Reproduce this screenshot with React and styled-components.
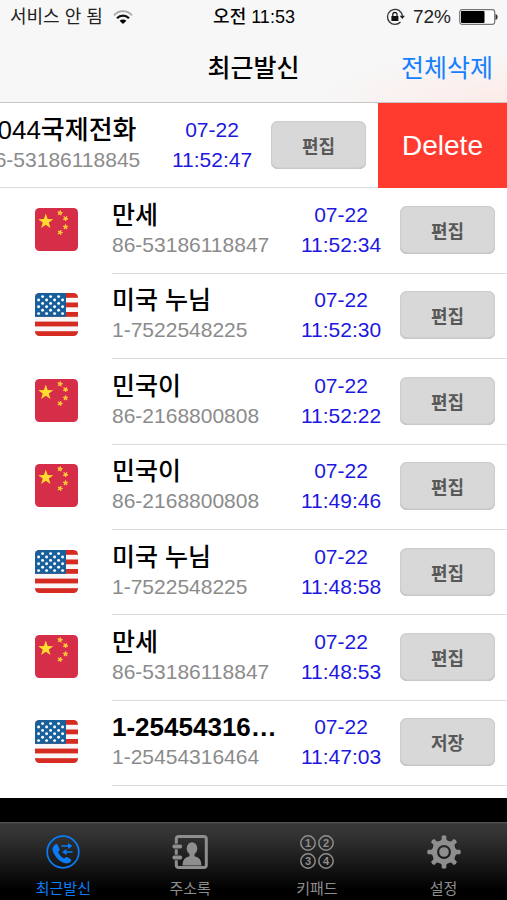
import React from "react";
import styled, { createGlobalStyle, css } from "styled-components";

const GlobalStyle = createGlobalStyle`
  *, *::before, *::after { box-sizing: border-box; }
  body {
    margin: 0;
    background: #fff;
    color: #000;
    font-family: "Liberation Sans", "Noto Sans CJK KR", sans-serif;
  }
  button { font-family: inherit; border: 0; padding: 0; cursor: pointer; }
`;

const Screen = styled.div`
  min-height: 100vh;
  display: flex;
  flex-direction: column;
  overflow: hidden;
`;

const TopArea = styled.header`
  background: radial-gradient(ellipse 190px 50px at 100% 100%, #fdebe8 0, #f7f7f700 100%), #f7f7f7;
  border-bottom: 1px solid #c9c6c8;
`;

const StatusBar = styled.div`
  display: grid;
  grid-template-columns: 1fr auto 1fr;
  align-items: center;
  height: 34px;
  padding: 0 9px 0 10px;
  font-size: 18px;
  line-height: 34px;
  color: #222;
`;

const StatusGroup = styled.div`
  display: flex;
  align-items: center;
  gap: ${(p) => (p.$end ? "8px" : "10px")};
  justify-content: ${(p) => (p.$end ? "flex-end" : "flex-start")};
`;

const Percent = styled.span`
  font-size: 19px;
`;

const Clock = styled.time`
  font-weight: 500;
  color: #000;
`;

const NavBar = styled.div`
  display: grid;
  grid-template-columns: 1fr auto 1fr;
  align-items: center;
  height: 68px;
  padding: 0 14px;
`;

const Title = styled.h1`
  grid-column: 2;
  margin: 0;
  font-size: 25px;
  line-height: 36px;
  font-weight: 500;
`;

const TextButton = styled.button`
  justify-self: end;
  background: none;
  color: #1480ff;
  font-size: 25px;
  line-height: 36px;
`;

const CallList = styled.ul`
  flex: 1;
  display: grid;
  grid-auto-rows: minmax(80px, 1fr);
  margin: 0;
  padding: 0 0 12px;
  list-style: none;
`;

const CallItem = styled.li`
  display: flex;
  min-width: 0;
  overflow: hidden;
`;

const Cell = styled.div`
  flex: 0 0 100%;
  min-width: 0;
  display: flex;
  padding-left: 35px;
  gap: 34px;
  ${(p) => p.$swiped && css`margin-left: -129px;`}
`;

const FlagBox = styled.div`
  flex: none;
  display: flex;
  align-items: center;
  width: 43px;
  padding-bottom: 3px;
`;

const CellBody = styled.div`
  flex: 1;
  min-width: 0;
  display: flex;
  align-items: center;
  gap: 14px;
  padding: 0 12px 1px 0;
  border-bottom: 1px solid #dcdcde;
`;

const Person = styled.div`
  flex: 1;
  min-width: 0;
  line-height: 30px;
  white-space: nowrap;
`;

const Name = styled.div`
  font-size: ${(p) => (p.$large ? 26 : 25)}px;
  font-weight: ${(p) => (p.$strong ? 700 : 500)};
  overflow: hidden;
  text-overflow: ellipsis;
`;

const Number = styled.div`
  font-size: 21px;
  color: #8b8b8b;
`;

const When = styled.time`
  flex: none;
  display: flex;
  flex-direction: column;
  align-items: center;
  width: 90px;
  font-size: 21px;
  line-height: 30px;
  color: #1d18e0;
`;

const ActionButton = styled.button`
  flex: none;
  width: 95px;
  height: 48px;
  border-radius: 7px;
  background: #d8d8d8;
  box-shadow: inset 0 0 1px 1px #cccccc, inset 0 -1px 1px #a4a4a4;
  color: #585858;
  font-size: 18px;
  font-weight: 700;
`;

const DeleteButton = styled.button`
  flex: 0 0 129px;
  background: #ff3b30;
  color: #fff;
  font-size: 28px;
`;

const TabBar = styled.nav`
  display: grid;
  grid-template-columns: repeat(4, 1fr);
  border-top: 24px solid #000;
  background: linear-gradient(#5a5a5a 0, #383838 2px, #303030 16px, #121212 48px, #000 68px) padding-box;
`;

const Tab = styled.button`
  display: flex;
  flex-direction: column;
  align-items: center;
  gap: 10px;
  height: 78px;
  padding-top: 13px;
  background: none;
  color: ${(p) => (p.$active ? "#0a7cf8" : "#8e8e8e")};
  font-size: 15px;
  line-height: 20px;
`;

const STAR = "M0 -1 L.235 -.324 .951 -.309 .38 .124 .588 .809 0 .4 -.588 .809 -.38 .124 -.951 -.309 -.235 -.324Z";

function ChinaFlag() {
  const small = [[25, 5, 10], [30.5, 10.5, 30], [30.5, 19, 0], [25, 24.5, 20]];
  return (
    <svg width="43" height="43" viewBox="0 0 43 43" role="img" aria-label="중국">
      <rect width="43" height="43" rx="4.500" fill="#d62d48" />
      <path d={STAR} transform="translate(10.8 13.6) scale(8)" fill="#ffdc2e" />
      {small.map(([x, y, r]) => (
        <path
          key={y}
          d={STAR}
          transform={`translate(${x} ${y}) rotate(${r}) scale(2.5)`}
          fill="#ffc93c"
          stroke="#ffc93c"
          strokeWidth=".35"
          strokeLinejoin="round"
        />
      ))}
    </svg>
  );
}

function UsaFlag() {
  const stars = [];
  for (let row = 0; row < 6; row++) {
    const offset = row % 2 ? 3.6 : 7.6;
    for (let x = offset; x < 29; x += 8) stars.push([x, 3.6 + row * 3.4]);
  }
  return (
    <svg width="43" height="43" viewBox="0 0 43 43" role="img" aria-label="미국">
      <clipPath id="flag-corners"><rect width="43" height="43" rx="4.500" /></clipPath>
      <g clipPath="url(#flag-corners)">
        <rect width="43" height="43" fill="#f8f6f6" />
        {[0, 9.5, 19, 28.6, 38.2].map((y) => (
          <rect key={y} y={y} width="43" height="4.8" fill="#d52b20" />
        ))}
        <rect width="31" height="23.8" fill="#17609c" />
        {stars.map(([x, y]) => (
          <circle key={`${x}-${y}`} cx={x} cy={y} r="1.450" fill="#fff" />
        ))}
      </g>
    </svg>
  );
}

function WifiIcon() {
  return (
    <svg width="20" height="15" viewBox="0 0 20 15" fill="none" strokeWidth="2.2" aria-hidden="true">
      <path d="M1 5.3C6-.2 14-.2 19 5.3" stroke="#a9a9a9" strokeWidth="1.8" />
      <path d="M4 8.3C7.4 4.6 12.6 4.6 16 8.3" stroke="#111" />
      <path d="M10 14L6.6 10.8C8.6 9 11.4 9 13.4 10.8Z" fill="#000" />
    </svg>
  );
}

function LockIcon() {
  return (
    <svg width="19" height="18" viewBox="0 0 19 18" fill="none" aria-hidden="true">
      <path d="M15.2 4.6A7.5 7.5 0 1 0 14.5 14M15.2 4.6A7.5 7.5 0 0 1 16.3 8" stroke="#333" strokeWidth="1.3" />
      <path d="M13.6 7.7H19L16.3 11Z" fill="#222" />
      <rect x="5.4" y="8" width="7" height="5" rx=".5" fill="#111" />
      <path d="M6.8 8.3V6.5a2.1 2.1 0 0 1 4.2 0v1.8" stroke="#111" strokeWidth="1.2" />
    </svg>
  );
}

function BatteryIcon() {
  return (
    <svg width="39" height="16" viewBox="0 0 39 16" aria-hidden="true">
      <rect x=".7" y=".7" width="35" height="14.6" rx="2.5" fill="#fff" stroke="#777" strokeWidth="1.2" />
      <rect x="2" y="2" width="23.5" height="12" rx="1" fill="#000" />
      <path d="M36.5 5q2.2.6 2.2 3t-2.2 3z" fill="#333" />
    </svg>
  );
}

function RecentIcon() {
  return (
    <svg width="34" height="34" viewBox="0 0 34 34" fill="none" aria-hidden="true">
      <circle cx="17" cy="17" r="15.8" stroke="currentColor" strokeWidth="1.7" />
      <path d="M9.600 9.200C7 11 5.800 13.500 7.200 17c2.300 5.500 6.300 9.600 11.700 11.300 3 .6 5.300-.6 6.300-2.600.3-.8 0-1.300-.7-1.700l-3.600-1.900c-.7-.4-1.300-.2-1.700.4l-.8 1c-2.700-.9-5.500-4-6.300-6.800l1.200-.9c.5-.5.6-1 .3-1.600l-2-4.400c-.4-.8-1.200-1.100-2-.6Z" fill="currentColor" />
      <path d="M15.500 11H23M26.500 17H19.500" stroke="currentColor" strokeWidth="1.400" />
      <path d="M22 8l4.500 3L22 14ZM20.500 14L16 17l4.500 3Z" fill="currentColor" />
    </svg>
  );
}

function ContactsIcon() {
  return (
    <svg width="36" height="34" viewBox="0 0 36 34" fill="none" aria-hidden="true">
      <rect x="4.300" y="1.500" width="30" height="31" rx="2.500" stroke="currentColor" strokeWidth="3" />
      <path d="M2.500 11.500h5.500M2.500 22.500h5.500" stroke="#1c1c1c" strokeWidth="5.500" />
      <path d="M2.300 11.500h6M2.300 22.500h6" stroke="currentColor" strokeWidth="3.800" strokeLinecap="round" />
      <ellipse cx="20" cy="13.500" rx="5.300" ry="6.200" fill="currentColor" />
      <path d="M17.500 18h5v3.300c4 .9 6.800 3 7 9.200H10.500c.2-6.200 3-8.300 7-9.200Z" fill="currentColor" />
    </svg>
  );
}

const KeyDigit = styled.text`
  font: 700 11px "Liberation Sans", sans-serif;
  fill: currentColor;
  text-anchor: middle;
`;

function KeypadIcon() {
  const keys = [[8, 8, 1], [26, 8, 2], [8, 26, 3], [26, 26, 4]];
  return (
    <svg width="34" height="34" viewBox="0 0 34 34" aria-hidden="true">
      {keys.map(([x, y, n]) => (
        <g key={n}>
          <circle cx={x} cy={y} r="7.200" fill="none" stroke="currentColor" strokeWidth="1.500" />
          <KeyDigit x={x} y={y + 4}>{n}</KeyDigit>
        </g>
      ))}
    </svg>
  );
}

function GearIcon() {
  return (
    <svg width="34" height="34" viewBox="-17 -17 34 34" fill="none" aria-hidden="true">
      {[0, 45, 90, 135, 180, 225, 270, 315].map((a) => (
        <path key={a} d="M-4-10.500L-2.300-12.800V-16Q0-17.600 2.300-16V-12.800L4-10.500Z" transform={`rotate(${a})`} fill="currentColor" />
      ))}
      <circle r="9.500" stroke="currentColor" strokeWidth="5" />
      <circle r="4.800" fill="currentColor" />
    </svg>
  );
}

const CALLS = [
  { flag: "cn", name: "0044국제전화", number: "86-53186118845", time: "11:52:47", action: "편집", swiped: true },
  { flag: "cn", name: "만세", number: "86-53186118847", time: "11:52:34", action: "편집" },
  { flag: "us", name: "미국 누님", number: "1-7522548225", time: "11:52:30", action: "편집" },
  { flag: "cn", name: "민국이", number: "86-2168800808", time: "11:52:22", action: "편집" },
  { flag: "cn", name: "민국이", number: "86-2168800808", time: "11:49:46", action: "편집" },
  { flag: "us", name: "미국 누님", number: "1-7522548225", time: "11:48:58", action: "편집" },
  { flag: "cn", name: "만세", number: "86-53186118847", time: "11:48:53", action: "편집" },
  { flag: "us", name: "1-25454316464", number: "1-25454316464", time: "11:47:03", action: "저장", strong: true },
];

const TABS = [
  { label: "최근발신", Icon: RecentIcon, active: true },
  { label: "주소록", Icon: ContactsIcon },
  { label: "키패드", Icon: KeypadIcon },
  { label: "설정", Icon: GearIcon },
];

function CallRow({ call }) {
  return (
    <CallItem>
      <Cell $swiped={call.swiped}>
        <FlagBox>{call.flag === "cn" ? <ChinaFlag /> : <UsaFlag />}</FlagBox>
        <CellBody>
          <Person>
            <Name $strong={call.strong} $large={call.strong || call.swiped}>{call.name}</Name>
            <Number>{call.number}</Number>
          </Person>
          <When>
            <span>07-22</span>
            <span>{call.time}</span>
          </When>
          <ActionButton type="button">{call.action}</ActionButton>
        </CellBody>
      </Cell>
      {call.swiped && <DeleteButton type="button">Delete</DeleteButton>}
    </CallItem>
  );
}

export default function App() {
  return (
    <>
      <GlobalStyle />
      <Screen>
        <TopArea>
          <StatusBar>
            <StatusGroup>
              <span>서비스 안 됨</span>
              <WifiIcon />
            </StatusGroup>
            <Clock>오전 11:53</Clock>
            <StatusGroup $end>
              <LockIcon />
              <Percent>72%</Percent>
              <BatteryIcon />
            </StatusGroup>
          </StatusBar>
          <NavBar>
            <Title>최근발신</Title>
            <TextButton type="button">전체삭제</TextButton>
          </NavBar>
        </TopArea>
        <CallList>
          {CALLS.map((call) => (
            <CallRow key={call.time} call={call} />
          ))}
        </CallList>
        <TabBar>
          {TABS.map(({ label, Icon, active }) => (
            <Tab key={label} type="button" $active={active} aria-current={active ? "page" : undefined}>
              <Icon />
              <span>{label}</span>
            </Tab>
          ))}
        </TabBar>
      </Screen>
    </>
  );
}
